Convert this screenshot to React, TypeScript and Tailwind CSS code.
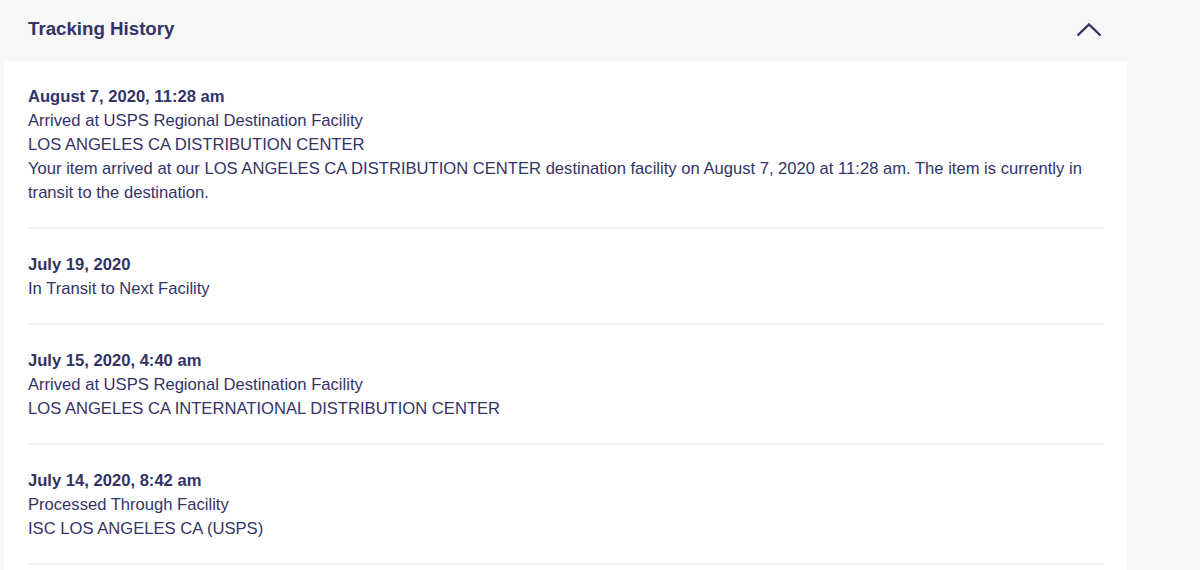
import React from 'react';

type TrackingEvent = {
  date: string;
  lines: string[];
};

const events: TrackingEvent[] = [
  {
    date: 'August 7, 2020, 11:28 am',
    lines: [
      'Arrived at USPS Regional Destination Facility',
      'LOS ANGELES CA DISTRIBUTION CENTER',
      'Your item arrived at our LOS ANGELES CA DISTRIBUTION CENTER destination facility on August 7, 2020 at 11:28 am. The item is currently in transit to the destination.'
    ]
  },
  {
    date: 'July 19, 2020',
    lines: ['In Transit to Next Facility']
  },
  {
    date: 'July 15, 2020, 4:40 am',
    lines: ['Arrived at USPS Regional Destination Facility', 'LOS ANGELES CA INTERNATIONAL DISTRIBUTION CENTER']
  },
  {
    date: 'July 14, 2020, 8:42 am',
    lines: ['Processed Through Facility', 'ISC LOS ANGELES CA (USPS)']
  }
];

const ChevronUp = () => (
  <svg width="26" height="14" viewBox="0 0 26 14" fill="none" className="text-[#333366]">
    <polyline points="1.5,12.5 13,1.5 24.5,12.5" stroke="currentColor" strokeWidth="2.4" />
  </svg>
);

export default function App() {
  return (
    <div className="h-screen bg-[#f7f7f7] text-[#333366] font-['Liberation_Sans',Arial,sans-serif] overflow-hidden">
      <div className="ml-1 w-[1123px]">
        <div className="flex items-center justify-between h-[59px] pl-6 pr-[25px]">
          <h2 className="text-[18.7px] font-bold leading-[22px] -mt-[2px]">Tracking History</h2>
          <ChevronUp />
        </div>
        <div className="bg-white px-6 mt-[2px] pb-10">
          {events.map((ev, i) => (
            <div key={i} className="pt-6 pb-[22px] border-b-2 border-[#f1f1f1] text-[16.6px] leading-6">
              <div className="font-bold">{ev.date}</div>
              {ev.lines.map((l, j) => (
                <div key={j}>{l}</div>
              ))}
            </div>
          ))}
        </div>
      </div>
    </div>
  );
}
